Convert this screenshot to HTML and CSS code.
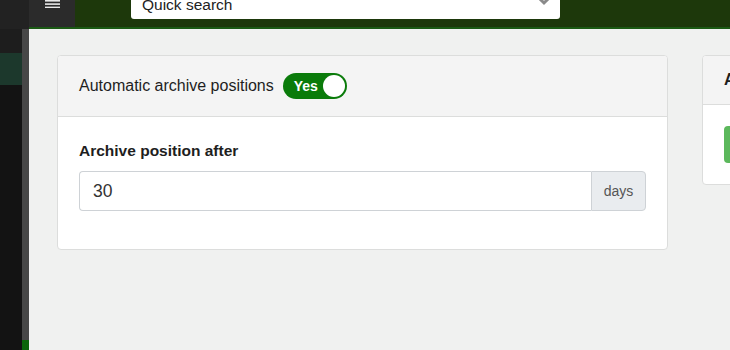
FILE: index.html
```html
<!DOCTYPE html>
<html lang="en">
<head>
    <meta charset="UTF-8">
    <meta name="viewport" content="width=device-width, initial-scale=1.0">
    <title>Archive settings</title>
    <link rel="stylesheet" href="styles.css">
</head>
<body>
    <div class="app">
        <aside class="sidebar">
            <div class="sidebar-head"></div>
            <div class="sidebar-item"></div>
            <div class="sidebar-item active"></div>
        </aside>
        <div class="rail">
            <div class="rail-top"></div>
            <div class="rail-fill"></div>
            <div class="rail-end"></div>
        </div>
        <div class="main">
            <header class="topbar">
                <button class="menu-btn" aria-label="Menu">
                    <svg width="15" height="8" viewBox="0 0 15 8">
                        <rect x="0" y="0" width="15" height="1.6" fill="#e8e8e8"/>
                        <rect x="0" y="3.3" width="15" height="1.6" fill="#e8e8e8"/>
                        <rect x="0" y="6.6" width="15" height="1.4" fill="#e8e8e8"/>
                    </svg>
                </button>
                <div class="search">
                    <span class="search-text">Quick search</span>
                    <svg class="search-caret" width="16" height="10" viewBox="0 0 16 10">
                        <path d="M2 1 L8 7 L14 1" fill="none" stroke="#8a8a8a" stroke-width="3"/>
                    </svg>
                </div>
            </header>
            <div class="content">
                <section class="card card-main">
                    <div class="card-header">
                        <span class="card-title">Automatic archive positions</span>
                        <span class="toggle">
                            <span class="toggle-label">Yes</span>
                            <span class="toggle-knob"></span>
                        </span>
                    </div>
                    <div class="card-body">
                        <label class="field-label">Archive position after</label>
                        <div class="input-group">
                            <input class="input" type="text" value="30">
                            <span class="input-addon">days</span>
                        </div>
                    </div>
                </section>
                <section class="card card-side">
                    <div class="card-header side-header">
                        <span class="card-title side-title">A</span>
                    </div>
                    <div class="card-body side-body">
                        <button class="btn-green" aria-label="Archive"></button>
                    </div>
                </section>
            </div>
        </div>
    </div>
</body>
</html>
```

FILE: styles.css
```css
body {
    margin: 0;
    font-family: 'Liberation Sans', Arial, sans-serif;
    background: #f0f1f0;
    overflow: hidden;
}
.app {
    display: flex;
    height: 350px;
    width: 730px;
}
.sidebar {
    width: 22px;
    flex: none;
    background: #131313;
}
.sidebar-head {
    height: 29px;
    background: #222;
}
.sidebar-item {
    height: 24px;
    background: #1d1d1d;
}
.sidebar-item.active {
    height: 32px;
    background: #1c382c;
}
.rail {
    width: 7px;
    flex: none;
    display: flex;
    flex-direction: column;
}
.rail-top {
    height: 29px;
    background: #222;
}
.rail-fill {
    flex: 1;
    background: #474747;
}
.rail-end {
    height: 10px;
    background: #0b650b;
}
.main {
    flex: 1;
    min-width: 0;
    display: flex;
    flex-direction: column;
    overflow: hidden;
}
.topbar {
    height: 27px;
    flex: none;
    display: flex;
    align-items: flex-start;
    background: #1d380b;
    border-bottom: 2px solid #1b5a14;
}
.menu-btn {
    width: 46px;
    height: 27px;
    flex: none;
    border: none;
    padding: 0 0 0 16px;
    background: #2b2b2b;
    display: flex;
    align-items: flex-start;
}
.menu-btn svg {
    display: block;
}
.search {
    margin-left: 56px;
    margin-top: -15px;
    width: 429px;
    height: 34px;
    box-sizing: border-box;
    background: #fff;
    border-radius: 3px;
    display: flex;
    align-items: flex-end;
    padding: 0 8px 5px 11px;
}
.search-text {
    flex: 1;
    font-size: 15.5px;
    line-height: 18px;
    color: #222;
}
.search-caret {
    margin-bottom: 8px;
}
.content {
    flex: 1;
    display: flex;
    align-items: flex-start;
    gap: 34px;
    padding: 26px 0 0 28px;
}
.card {
    flex: none;
    background: #fff;
    border: 1px solid #dcdddc;
    border-radius: 4px;
    overflow: hidden;
}
.card-main {
    width: 609px;
}
.card-side {
    width: 200px;
}
.card-header {
    height: 60px;
    display: flex;
    align-items: center;
    gap: 9px;
    padding: 0 21px;
    background: #f4f4f4;
    border-bottom: 1px solid #dcdddc;
}
.card-title {
    font-size: 16px;
    color: #1e1e1e;
}
.toggle {
    width: 64px;
    height: 26px;
    box-sizing: border-box;
    border-radius: 13px;
    background: #0a7b0a;
    display: flex;
    align-items: center;
    justify-content: space-between;
    padding: 0 2px 0 11px;
}
.toggle-label {
    color: #fff;
    font-weight: bold;
    font-size: 14px;
}
.toggle-knob {
    width: 22px;
    height: 22px;
    border-radius: 50%;
    background: #fff;
}
.card-body {
    padding: 24px 21px 38px;
}
.field-label {
    display: block;
    font-size: 15.5px;
    line-height: 20px;
    font-weight: bold;
    color: #1e1e1e;
    margin-bottom: 10px;
}
.input-group {
    display: flex;
    height: 40px;
}
.input {
    flex: 1;
    min-width: 0;
    box-sizing: border-box;
    height: 40px;
    border: 1px solid #ced2d6;
    border-right: none;
    border-radius: 4px 0 0 4px;
    padding: 0 13px;
    font-family: inherit;
    font-size: 17.5px;
    color: #333;
    background: #fff;
}
.input-addon {
    width: 55px;
    box-sizing: border-box;
    display: flex;
    align-items: center;
    justify-content: center;
    background: #e9ecef;
    border: 1px solid #ced2d6;
    border-radius: 0 4px 4px 0;
    font-size: 14px;
    color: #555;
}
.side-header {
    height: 48px;
}
.side-title {
    font-weight: bold;
}
.side-body {
    padding: 21px 21px 21px;
}
.btn-green {
    display: block;
    width: 120px;
    height: 37px;
    border: none;
    border-radius: 4px;
    background: #5cb85c;
}
```
